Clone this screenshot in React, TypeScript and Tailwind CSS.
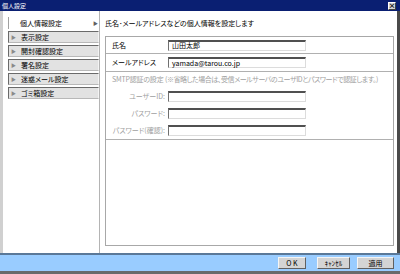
const items = ['表示設定', '開封確認設定', '署名設定', '迷惑メール設定', 'ゴミ箱設定'];

const inputCls =
  'h-[11px] w-[138px] bg-white border-t-2 border-l border-t-[#505050] border-l-[#707070] border-r border-b border-r-[#dcdcdc] border-b-[#dcdcdc] flex items-center pl-[3px] leading-none';

function Btn({ label, w }: { label: string; w: string }) {
  return (
    <div
      className={`${w} h-[12px] flex items-center justify-center bg-[#d4d4d4] border border-t-[#f4f4f4] border-l-[#f4f4f4] border-r-[#606060] border-b-[#606060] leading-none`}
    >
      {label}
    </div>
  );
}

export default function App() {
  return (
    <div className="w-[400px] h-[274px] flex flex-col bg-white overflow-hidden whitespace-nowrap font-['Noto_Sans_CJK_JP','Noto_Sans',sans-serif] text-[7px] text-black [font-feature-settings:'palt']">
      {/* title bar */}
      <div className="h-[11px] shrink-0 bg-[#0a1f72] flex items-center justify-between pl-[2px] pr-[4px]">
        <span className="text-white text-[6px] leading-none">個人設定</span>
        <div className="w-[8px] h-[8px] bg-[#d4d4d4] border border-t-white border-l-white border-r-[#404040] border-b-[#404040] flex items-center justify-center text-[7px] leading-none font-bold">
          ×
        </div>
      </div>

      {/* body */}
      <div className="flex-1 flex border-l-[3px] border-l-[#d0d0d0] border-r-[3px] border-r-[#4a4a4a] min-h-0">
        {/* sidebar */}
        <div className="w-[97px] shrink-0 border-r border-r-[#b4b4b4] pl-[5px] pt-[6px] flex flex-col gap-[2px]">
          <div className="h-[12px] bg-white border-l border-l-[#a0a0a0] flex items-center justify-between pl-[11px] pr-[1px]">
            <span>個人情報設定</span>
            <span className="text-[5px] text-[#606060]">▶</span>
          </div>
          {items.map((t) => (
            <div
              key={t}
              className="h-[12px] bg-[#e2e2e2] border border-t-[#6a6a6a] border-l-[#6a6a6a] border-r-[#f4f4f4] border-b-[#b8b8b8] flex items-center gap-[5px] pl-[2px]"
            >
              <span className="text-[5px] text-[#8a8a8a]">▶</span>
              <span>{t}</span>
            </div>
          ))}
        </div>

        {/* main */}
        <div className="flex-1 flex flex-col pl-[5px] pr-[3px] pt-[6px] pb-[7px]">
          <div className="h-[12px] flex items-center">氏名･メールアドレスなどの個人情報を設定します</div>
          <div className="flex-1 mt-[7px] border border-[#a8a8a8] flex flex-col">
            <div className="h-[17px] flex items-center border-b border-b-[#b0b0b0]">
              <span className="w-[62px] pl-[6px]">氏名</span>
              <div className={inputCls}>山田太郎</div>
            </div>
            <div className="h-[18px] flex items-center border-b border-b-[#b0b0b0]">
              <span className="w-[62px] pl-[6px]">メールアドレス</span>
              <div className={inputCls}>yamada@tarou.co.jp</div>
            </div>
            <div className="flex flex-col border-b border-b-[#b0b0b0] text-[#a0a0a0]">
              <div className="h-[12px] mt-[1px] flex items-center">
                <span className="w-[59px] shrink-0 pl-[6px] tracking-[-0.2px]">SMTP認証の設定</span>
                <span className="tracking-[-0.45px]">(※省略した場合は、受信メールサーバのユーザIDとパスワードで認証します。)</span>
              </div>
              <div className="mt-[3px]">
                {['ユーザーID:', 'パスワード:', 'パスワード(確認):'].map((l) => (
                  <div key={l} className="h-[17px] flex items-center">
                    <span className="w-[60px] text-right pr-[1px]">{l}</span>
                    <div className={`${inputCls} ml-[2px]`} />
                  </div>
                ))}
              </div>
            </div>
          </div>
        </div>
      </div>

      {/* bottom bar */}
      <div className="h-[21px] shrink-0 bg-[#99ccff] border-t-2 border-t-[#5a7898] border-b-[3px] border-b-[#6a6a6a] flex items-center justify-end pr-[6px]">
        <Btn label="O K" w="w-[28px]" />
        <div className="w-[11px]" />
        <Btn label="ｷｬﾝｾﾙ" w="w-[33px]" />
        <div className="w-[7px]" />
        <Btn label="適用" w="w-[37px]" />
      </div>
    </div>
  );
}
